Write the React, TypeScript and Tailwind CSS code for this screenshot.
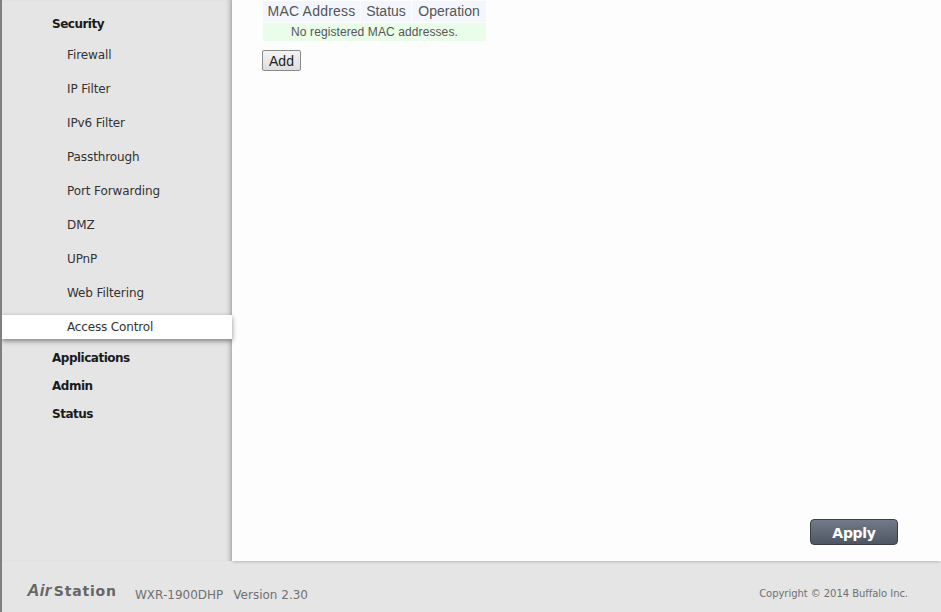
export default function App() {
  const items = ["Firewall", "IP Filter", "IPv6 Filter", "Passthrough", "Port Forwarding", "DMZ", "UPnP", "Web Filtering"];
  return (
    <div className="flex flex-col w-[941px] h-[612px] overflow-hidden bg-[#e5e5e5] border-l-2 border-[#7f7f7f] font-['DejaVu_Sans',sans-serif]">
      <div className="flex h-[561px]">
        <nav className="relative w-[230px] pt-[10px] shrink-0 shadow-[inset_-5px_0_4px_-3px_rgba(0,0,0,0.25)]">
          <div className="h-[28px] pl-[50px] leading-[28px] text-[12px] font-bold text-[#1a1a1a] tracking-[-0.5px]">Security</div>
          <ul className="flex flex-col gap-[10px] mt-[5px]">
            {items.map((t) => (
              <li key={t} className="h-[24px] pl-[65px] leading-[24px] text-[12px] text-[#333333] tracking-[-0.1px]">{t}</li>
            ))}
            <li className="h-[24px] pl-[65px] leading-[24px] text-[12px] text-[#333333] tracking-[-0.15px] bg-white shadow-[0_2px_5px_rgba(0,0,0,0.45)]">Access Control</li>
          </ul>
          <div className="mt-[5px]">
            {["Applications", "Admin", "Status"].map((t) => (
              <div key={t} className="h-[28px] pl-[50px] leading-[28px] text-[12px] font-bold text-[#1a1a1a] tracking-[-0.5px]">{t}</div>
            ))}
          </div>
        </nav>
        <main className="flex-1 flex flex-col bg-[#fdfdfd] shadow-[0_2px_3px_-1px_rgba(0,0,0,0.2)] pl-[30px] pr-[43px] font-['Liberation_Sans',sans-serif]">
          <table className="w-[225px] border-separate border-spacing-[1px] table-fixed text-[#555555] mt-0">
            <thead>
              <tr className="h-[20px]">
                <th className="w-[97px] p-0 bg-[#f4f6fd] text-[14px] font-normal tracking-[0.2px]">MAC Address</th>
                <th className="w-[50px] p-0 bg-[#f4f6fd] text-[14px] font-normal">Status</th>
                <th className="p-0 bg-[#f4f6fd] text-[14px] font-normal">Operation</th>
              </tr>
            </thead>
            <tbody>
              <tr className="h-[18px]">
                <td colSpan={3} className="p-0 bg-[#eafdea] text-center text-[12px] tracking-[0.1px]">No registered MAC addresses.</td>
              </tr>
            </tbody>
          </table>
          <button className="self-start w-[39px] h-[21px] mt-[8px] rounded-[2px] border border-[#8a8a8a] bg-gradient-to-b from-[#f4f4f4] to-[#dedede] text-[14px] leading-none text-[#222222] text-center">Add</button>
          <button className="self-end mt-auto mb-[16px] w-[88px] h-[26px] pt-[2px] rounded-[4px] border border-[#3a3f47] bg-gradient-to-b from-[#747b88] to-[#4f5663] text-white font-bold text-[14px] leading-none font-['DejaVu_Sans',sans-serif] tracking-[-0.3px]">Apply</button>
        </main>
      </div>
      <footer className="flex-1 flex items-start text-[#707070]">
        <span className="ml-[25px] mt-[22px] w-[108px] flex items-baseline text-[#666666] leading-[16px] font-bold">
          <span className="italic text-[17px] font-['Liberation_Sans',sans-serif] tracking-[0.4px] mr-[2px]">Air</span>
          <span className="text-[14px] font-['DejaVu_Sans',sans-serif] tracking-[0.8px]">Station</span>
        </span>
        <span className="mt-[26px] text-[12px] leading-[16px]">WXR-1900DHP</span>
        <span className="ml-[10px] mt-[26px] text-[12px] leading-[16px]">Version 2.30</span>
        <span className="ml-auto mr-[33px] mt-[26px] text-[10px] leading-[14px] tracking-[-0.05px]">Copyright © 2014 Buffalo Inc.</span>
      </footer>
    </div>
  );
}
